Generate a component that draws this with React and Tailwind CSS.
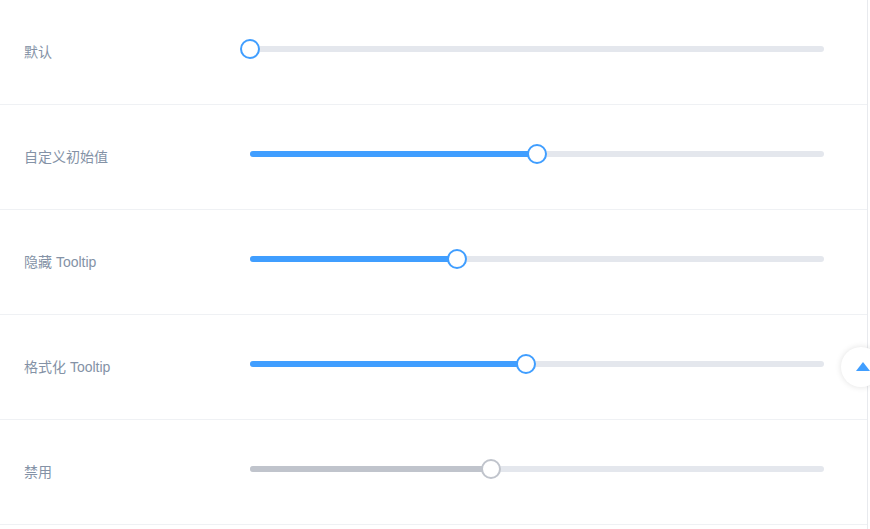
import React from "react";

const rows = [
  { label: "默认", value: 0 },
  { label: "自定义初始值", value: 50 },
  { label: "隐藏 Tooltip", value: 36 },
  { label: "格式化 Tooltip", value: 48 },
  { label: "禁用", value: 42, disabled: true },
];

function Slider({ value, disabled }) {
  return (
    <div className="relative w-[574px] h-[6px] rounded-[3px] bg-[#e4e7ed] mb-[6px]">
      <div
        className={`absolute left-0 top-0 h-[6px] rounded-[3px] ${disabled ? "bg-[#c0c4cc]" : "bg-[#409eff]"}`}
        style={{ width: `${value}%` }}
      />
      <div
        className={`absolute top-[-7px] w-[20px] h-[20px] -ml-[10px] rounded-full bg-white border-2 ${disabled ? "border-[#c0c4cc]" : "border-[#409eff]"}`}
        style={{ left: `${value}%` }}
      />
    </div>
  );
}

export default function App() {
  return (
    <div className="relative w-[870px] h-[529px] overflow-hidden bg-white" style={{ fontFamily: '"Liberation Sans", "Noto Sans CJK SC", sans-serif' }}>
      <div className="w-[868px] h-[529px] border-r border-[#e8eaee]">
        {rows.map((r, i) => (
          <div key={i} className="flex items-center h-[105px] border-b border-[#eff1f4]">
            <div className="w-[250px] pl-6 text-[14px] text-[#8492a6]">{r.label}</div>
            <Slider value={r.value} disabled={r.disabled} />
          </div>
        ))}
      </div>
      <div className="absolute left-[841px] top-[347px] w-[40px] h-[40px] rounded-full bg-white shadow-[0_0_6px_rgba(0,0,0,0.12)] flex items-center justify-center">
        <svg width="14" height="9" viewBox="0 0 14 9" className="-mt-[1px] ml-[3px]">
          <polygon points="7,0 14,9 0,9" fill="#409eff" />
        </svg>
      </div>
    </div>
  );
}
